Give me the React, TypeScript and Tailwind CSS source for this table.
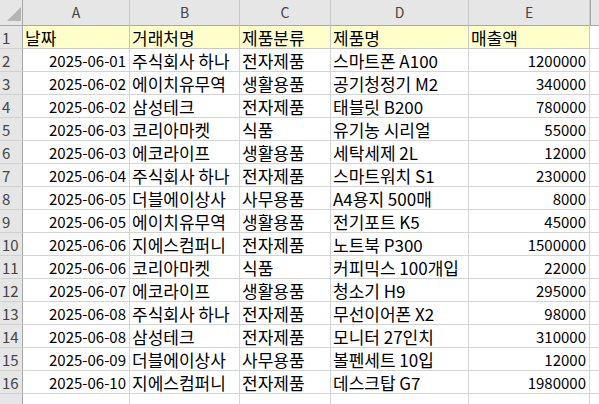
import { FC } from "react";

const rows: string[][] = [
    ["2025-06-01", "주식회사 하나", "전자제품", "스마트폰 A100", "1200000"],
    ["2025-06-02", "에이치유무역", "생활용품", "공기청정기 M2", "340000"],
    ["2025-06-02", "삼성테크", "전자제품", "태블릿 B200", "780000"],
    ["2025-06-03", "코리아마켓", "식품", "유기농 시리얼", "55000"],
    ["2025-06-03", "에코라이프", "생활용품", "세탁세제 2L", "12000"],
    ["2025-06-04", "주식회사 하나", "전자제품", "스마트워치 S1", "230000"],
    ["2025-06-05", "더블에이상사", "사무용품", "A4용지 500매", "8000"],
    ["2025-06-05", "에이치유무역", "생활용품", "전기포트 K5", "45000"],
    ["2025-06-06", "지에스컴퍼니", "전자제품", "노트북 P300", "1500000"],
    ["2025-06-06", "코리아마켓", "식품", "커피믹스 100개입", "22000"],
    ["2025-06-07", "에코라이프", "생활용품", "청소기 H9", "295000"],
    ["2025-06-08", "주식회사 하나", "전자제품", "무선이어폰 X2", "98000"],
    ["2025-06-08", "삼성테크", "전자제품", "모니터 27인치", "310000"],
    ["2025-06-09", "더블에이상사", "사무용품", "볼펜세트 10입", "12000"],
    ["2025-06-10", "지에스컴퍼니", "전자제품", "데스크탑 G7", "1980000"],
];

const headers = ["날짜", "거래처명", "제품분류", "제품명", "매출액"];
const letters = ["A", "B", "C", "D", "E"];

const grid = "grid grid-cols-[23px_107px_110px_91px_138px_121px_1fr]";

const RowNum: FC<{ n?: number }> = ({ n }) => (
    <div className="h-[23px] bg-[#e6e6e6] border-r border-r-[#a8a8a8] border-b border-b-[#d0d0d0] pl-[2px] flex items-end text-[#444] text-[15px] leading-[21px]">
        {n}
    </div>
);

export default function App() {
    return (
        <div className="w-[599px] h-[404px] overflow-hidden bg-white text-[15px] text-black" style={{ fontFamily: '"Noto Sans CJK KR", "Noto Sans", sans-serif' }}>
            <div className={`${grid} h-[26px]`}>
                <div className="bg-[#e6e6e6] border-r border-r-[#a8a8a8] border-b border-b-[#a8a8a8] relative">
                    <svg width="14" height="14" className="absolute left-[7px] top-[7px]" viewBox="0 0 14 14">
                        <polygon points="14,0 14,14 0,14" fill="#b4b4b4" />
                    </svg>
                </div>
                {letters.map((l) => (
                    <div key={l} className="bg-[#e6e6e6] border-r border-r-[#c8c8c8] border-b border-b-[#a8a8a8] flex items-center justify-center text-[14px] text-[#444]">
                        {l}
                    </div>
                ))}
                <div className="bg-[#e6e6e6] border-l border-l-[#a8a8a8] border-b border-b-[#a8a8a8]" />
            </div>

            <div className={grid}>
                <RowNum n={1} />
                {headers.map((h) => (
                    <div key={h} className="h-[23px] bg-[#ffffcc] border-r border-b border-[#c8c8c8] pl-[2px] flex items-end text-[17px] leading-[21px] whitespace-nowrap">
                        {h}
                    </div>
                ))}
                <div className="h-[23px] border-b border-[#d4d4d4]" />
            </div>

            {rows.map((r, i) => (
                <div key={i} className={grid}>
                    <RowNum n={i + 2} />
                    {r.map((c, j) => (
                        <div
                            key={j}
                            className={`h-[23px] border-r border-b border-[#d4d4d4] flex items-end whitespace-nowrap ${j === 0 || j === 4 ? "justify-end pr-[3px] text-[15px] leading-[21px]" : "pl-[2px] text-[17px] leading-[21px]"}`}
                        >
                            {c}
                        </div>
                    ))}
                    <div className="h-[23px] border-b border-[#d4d4d4]" />
                </div>
            ))}

            <div className={grid}>
                <RowNum />
                {letters.map((l) => (
                    <div key={l} className="h-[23px] border-r border-[#d4d4d4]" />
                ))}
                <div />
            </div>
        </div>
    );
}
